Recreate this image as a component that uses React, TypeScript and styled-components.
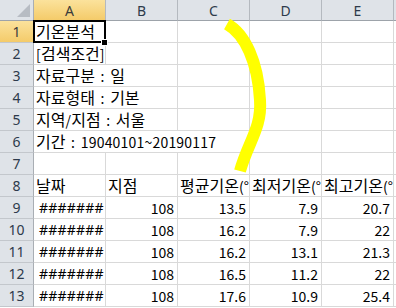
import React from "react";
import styled, { createGlobalStyle, css } from "styled-components";

const GlobalStyle = createGlobalStyle`
  html, body { margin: 0; padding: 0; background: #fff; overflow: hidden; }
  body { font-family: "Noto Sans CJK KR", "Noto Sans", sans-serif; }
`;

const COLS = "34px repeat(6, 72px)";
const GRID = "#d9d9d9";

const Sheet = styled.div`
  position: relative;
  width: 396px;
  height: 308px;
  overflow: hidden;
  background: #fff;
`;

const Row = styled.div<{ $header?: boolean }>`
  display: grid;
  grid-template-columns: ${COLS};
  height: ${(p) => (p.$header ? 21 : 22)}px;
`;

const Corner = styled.div`
  position: relative;
  box-sizing: border-box;
  background: #dfe3e8;
  border-right: 1px solid #a9aeb4;
  border-bottom: 1px solid #9da3aa;
  &::after {
    content: "";
    position: absolute;
    right: 3px;
    bottom: 3px;
    width: 13px;
    height: 13px;
    background: #b7bcc3;
    clip-path: polygon(100% 0, 100% 100%, 0 100%);
  }
`;

const selectedHeader = css`
  background: linear-gradient(#fbe29c, #f4cb6a);
  color: #3b3b3b;
`;

const ColHeader = styled.div<{ $sel?: boolean }>`
  box-sizing: border-box;
  display: flex;
  align-items: center;
  justify-content: center;
  background: #dfe3e8;
  color: #2d3a4b;
  border-right: 1px solid #b4b9bf;
  border-bottom: 1px solid #9da3aa;
  font-family: "Noto Sans", sans-serif;
  font-size: 14px;
  line-height: 1;
  padding-top: 1px;
  ${(p) => p.$sel && selectedHeader}
`;

const RowHeader = styled.div<{ $sel?: boolean }>`
  box-sizing: border-box;
  display: flex;
  align-items: center;
  justify-content: center;
  background: #dfe3e8;
  color: #2d3a4b;
  border-right: 1px solid #a9aeb4;
  border-bottom: 1px solid #c3c7cc;
  font-family: "Noto Sans", sans-serif;
  font-size: 14px;
  line-height: 1;
  padding-top: 1px;
  ${(p) => p.$sel && selectedHeader}
`;

const Cell = styled.div<{ $span?: number; $right?: boolean; $active?: boolean }>`
  position: relative;
  box-sizing: border-box;
  grid-column: span ${(p) => p.$span ?? 1};
  display: flex;
  align-items: flex-end;
  justify-content: ${(p) => (p.$right ? "flex-end" : "flex-start")};
  padding: 0 3px 3px 2px;
  border-right: 1px solid ${GRID};
  border-bottom: 1px solid ${GRID};
  color: #000;
  font-size: 14px;
  line-height: 1;
  white-space: pre;
  overflow: hidden;
  ${(p) =>
    p.$active &&
    css`
      overflow: visible;
      &::before {
        content: "";
        position: absolute;
        left: -1px;
        top: -1px;
        right: -1px;
        bottom: -1px;
        border: 2px solid #000;
        z-index: 2;
      }
      &::after {
        content: "";
        position: absolute;
        right: -3px;
        bottom: -4px;
        width: 5px;
        height: 5px;
        background: #000;
        border: 1px solid #fff;
        z-index: 3;
      }
    `}
`;

const Hangul = styled.span`
  font-size: 16px;
  word-spacing: 2px;
`;

const Latin = styled.span`
  letter-spacing: 0.2px;
`;

const Hash = styled.span`
  font-family: "Noto Sans", sans-serif;
  letter-spacing: 0.2px;
  padding-left: 3px;
`;

const Annotation = styled.svg`
  position: absolute;
  left: 0;
  top: 0;
  pointer-events: none;
  z-index: 5;
`;

function Txt({ text }: { text: string }) {
  const parts = text.split(/([\uAC00-\uD7A3 ]+)/).filter(Boolean);
  return (
    <span>
      {parts.map((p, i) =>
        /[\uAC00-\uD7A3 ]/.test(p[0]) ? <Hangul key={i}>{p}</Hangul> : <Latin key={i}>{p}</Latin>
      )}
    </span>
  );
}

const letters = ["A", "B", "C", "D", "E", "F"];

type Line = { text: string; span: number };
const info: Line[] = [
  { text: "기온분석", span: 1 },
  { text: "[검색조건]", span: 1 },
  { text: "자료구분 : 일", span: 2 },
  { text: "자료형태 : 기본", span: 2 },
  { text: "지역/지점 : 서울", span: 2 },
  { text: "기간 : 19040101~20190117", span: 3 },
];

const heads = ["날짜", "지점", "평균기온(°C)", "최저기온(°C)", "최고기온(°C)"];

const data = [
  ["108", "13.5", "7.9", "20.7"],
  ["108", "16.2", "7.9", "22"],
  ["108", "16.2", "13.1", "21.3"],
  ["108", "16.5", "11.2", "22"],
  ["108", "17.6", "10.9", "25.4"],
];

function Blanks({ n }: { n: number }) {
  return (
    <>
      {Array.from({ length: n }, (_, i) => (
        <Cell key={i} />
      ))}
    </>
  );
}

export default function App() {
  return (
    <>
      <GlobalStyle />
      <Sheet>
        <Row $header>
          <Corner />
          {letters.map((l, i) => (
            <ColHeader key={l} $sel={i === 0}>
              {l}
            </ColHeader>
          ))}
        </Row>
        {info.map((line, i) => (
          <Row key={i}>
            <RowHeader $sel={i === 0}>{i + 1}</RowHeader>
            <Cell $span={line.span} $active={i === 0}>
              <Txt text={line.text} />
            </Cell>
            <Blanks n={6 - line.span} />
          </Row>
        ))}
        <Row>
          <RowHeader>7</RowHeader>
          <Blanks n={6} />
        </Row>
        <Row>
          <RowHeader>8</RowHeader>
          {heads.map((h) => (
            <Cell key={h}>
              <Txt text={h} />
            </Cell>
          ))}
          <Cell />
        </Row>
        {data.map((r, i) => (
          <Row key={i}>
            <RowHeader>{i + 9}</RowHeader>
            <Cell>
              <Hash>#######</Hash>
            </Cell>
            {r.map((v, j) => (
              <Cell key={j} $right>
                {v}
              </Cell>
            ))}
            <Cell />
          </Row>
        ))}
        <Annotation width="396" height="308" viewBox="0 0 396 308">
          <path
            d="M 227 24 C 245 34, 258 62, 260 100 C 262 128, 248 142, 240 171"
            fill="none"
            stroke="#ffff00"
            strokeWidth="12"
          />
        </Annotation>
      </Sheet>
    </>
  );
}
